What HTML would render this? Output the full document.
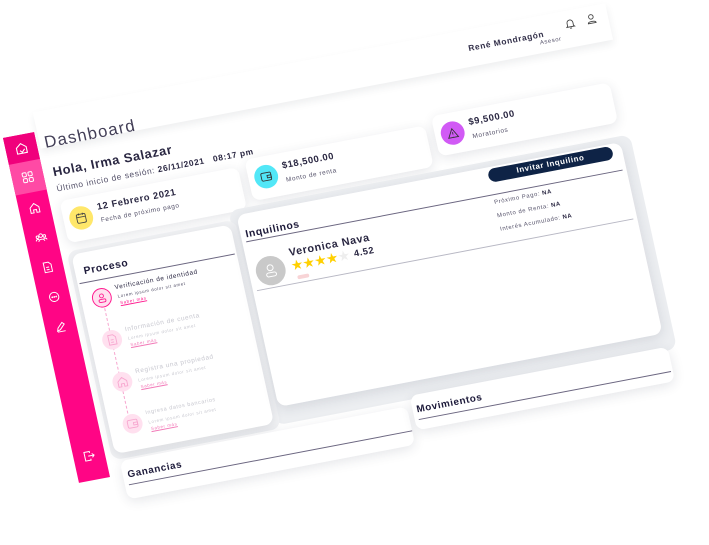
<!DOCTYPE html>
<html><head><meta charset="utf-8"><style>
*{margin:0;padding:0;box-sizing:border-box}
html,body{width:709px;height:545px;background:#fff;overflow:hidden;font-family:"Liberation Sans",sans-serif;color:#1d1a3a}
#s{position:absolute;left:0;top:0;width:620px;height:360px;transform-origin:0 0;transform:matrix(0.97,-0.185,0.211,0.958,3,138)}
.a{position:absolute}
.card{position:absolute;background:#fff;border-radius:8px;box-shadow:0 3px 12px rgba(40,50,70,.12)}
.t{position:absolute;white-space:nowrap;letter-spacing:.6px}
.circ{position:absolute;border-radius:50%}
svg{position:absolute;overflow:visible}
.line{position:absolute;height:1px;background:#6b6680}
.gl{position:absolute;height:1px;background:#b8b8c4}
</style></head><body>
<div id="s">
  <div class="a" style="left:35px;top:-20px;width:590px;height:38px;background:#fff;box-shadow:0 4px 8px rgba(40,50,70,.08)"></div>
  <div class="t" style="left:40px;top:3px;font-size:17px;color:#444058;letter-spacing:1.2px">Dashboard</div>
  <div class="t" style="left:480px;top:-6px;font-size:8.5px;font-weight:bold;color:#33304a">René Mondragón</div>
  <div class="t" style="left:552px;top:5px;font-size:6px;color:#55526a">Asesor</div>
  <svg style="left:580px;top:-12px" width="12" height="12" viewBox="0 0 12 12"><path d="M3 8V5a3 3 0 0 1 6 0v3l1 1H2zM5 10.5h2" fill="none" stroke="#444" stroke-width="0.9"/></svg>
  <svg style="left:602px;top:-13px" width="12" height="12" viewBox="0 0 12 12"><circle cx="6" cy="4" r="2.3" fill="none" stroke="#444" stroke-width="0.9"/><path d="M2 10.5c0-2.3 8-2.3 8 0z" fill="none" stroke="#444" stroke-width="0.9"/></svg>

  <div class="a" style="left:0;top:0;width:32px;height:360px;background:#ff0585"></div>
  <div class="a" style="left:0;top:0;width:32px;height:28px;background:#f0007c"></div>
  <div class="a" style="left:0;top:28px;width:32px;height:32px;background:#ff4aa5"></div>
  <svg style="left:9px;top:7px" width="14" height="14" viewBox="0 0 14 14"><path d="M2 12V6l5-4 5 4v6zM5 9l2 2 3-3" fill="none" stroke="#fff" stroke-width="1.1"/></svg>
  <svg style="left:10px;top:38px" width="12" height="12" viewBox="0 0 12 12" fill="none" stroke="#fff" stroke-width="1"><rect x="1" y="1" width="4" height="4" rx="1"/><rect x="7" y="1" width="4" height="4" rx="1"/><rect x="1" y="7" width="4" height="4" rx="1"/><rect x="7" y="7" width="4" height="4" rx="1"/></svg>
  <svg style="left:10px;top:70px" width="12" height="12" viewBox="0 0 12 12"><path d="M1.5 11V5.5L6 1.5l4.5 4V11H7.5V8h-3v3z" fill="none" stroke="#fff" stroke-width="1"/></svg>
  <svg style="left:10px;top:101px" width="12" height="12" viewBox="0 0 12 12" fill="none" stroke="#fff" stroke-width="1"><circle cx="6" cy="4" r="1.8"/><circle cx="2.5" cy="5" r="1.3"/><circle cx="9.5" cy="5" r="1.3"/><path d="M3 10c0-3 6-3 6 0M0.5 9c0-2 3-2 3-1M11.5 9c0-2-3-2-3-1"/></svg>
  <svg style="left:10px;top:132px" width="12" height="12" viewBox="0 0 12 12" fill="none" stroke="#fff" stroke-width="1"><path d="M2.5 1h5l2.5 2.5V11h-7.5zM4.5 6h3M4.5 8.5h3"/></svg>
  <svg style="left:10px;top:163px" width="12" height="12" viewBox="0 0 12 12" fill="none" stroke="#fff" stroke-width="1"><circle cx="6" cy="6" r="4.7"/><circle cx="4" cy="6" r=".4"/><circle cx="6" cy="6" r=".4"/><circle cx="8" cy="6" r=".4"/></svg>
  <svg style="left:10px;top:194px" width="12" height="12" viewBox="0 0 12 12" fill="none" stroke="#fff" stroke-width="1"><path d="M2 10l1-3 5-5 2 2-5 5zM2 11h8"/></svg>
  <svg style="left:10px;top:329px" width="12" height="12" viewBox="0 0 12 12" fill="none" stroke="#fff" stroke-width="1"><path d="M7 3V1.5H1.5v9H7V9M5 6h6M9 4l2 2-2 2"/></svg>

  <div class="t" style="left:42px;top:36px;font-size:13px;font-weight:bold;color:#2a2742">Hola, Irma Salazar</div>
  <div class="t" style="left:42px;top:56px;font-size:8.5px;color:#55526a">Último inicio de sesión: <b style="color:#2a2742">26/11/2021 &nbsp; 08:17 pm</b></div>

  <div class="card" style="left:42px;top:74px;width:184px;height:44px"></div>
  <div class="circ" style="left:48px;top:83px;width:24px;height:24px;background:#ffe76a"></div>
  <svg style="left:54px;top:89px" width="12" height="12" viewBox="0 0 12 12" fill="none" stroke="#444" stroke-width=".9"><rect x="1.5" y="2" width="9" height="9" rx="1.5"/><path d="M1.5 5h9M4 1v2M8 1v2"/></svg>
  <div class="t" style="left:78px;top:82px;font-size:9.5px;font-weight:bold;color:#2a2742">12 Febrero 2021</div>
  <div class="t" style="left:79px;top:98px;font-size:6.5px;color:#55526a">Fecha de próximo pago</div>

  <div class="card" style="left:234px;top:68px;width:186px;height:43px"></div>
  <div class="circ" style="left:240px;top:77px;width:24px;height:24px;background:#52e7f7"></div>
  <svg style="left:246px;top:83px" width="12" height="12" viewBox="0 0 12 12" fill="none" stroke="#333" stroke-width=".9"><rect x="1" y="2" width="10" height="8" rx="1.5"/><path d="M7 5h4v2.5H7z"/></svg>
  <div class="t" style="left:270px;top:76px;font-size:9.5px;font-weight:bold;color:#2a2742">$18,500.00</div>
  <div class="t" style="left:271px;top:93px;font-size:6.5px;color:#55526a">Monto de renta</div>

  <div class="card" style="left:428px;top:60px;width:184px;height:42px"></div>
  <div class="circ" style="left:434px;top:69px;width:24px;height:24px;background:#d15af5"></div>
  <svg style="left:440px;top:75px" width="12" height="12" viewBox="0 0 12 12" fill="none" stroke="#333" stroke-width=".9"><path d="M6 1.5L11 10.5H1zM6 5v2.5M6 9v.2"/></svg>
  <div class="t" style="left:464px;top:68px;font-size:9.5px;font-weight:bold;color:#2a2742">$9,500.00</div>
  <div class="t" style="left:465px;top:85px;font-size:6.5px;color:#55526a">Moratorios</div>

  <div class="a" style="left:207px;top:116px;width:414px;height:224px;background:#eceef1;border-radius:10px"></div>
  <div class="a" style="left:38px;top:126px;width:174px;height:218px;background:#f1f2f4;border-radius:10px"></div>

  <div class="card" style="left:42px;top:130px;width:164px;height:208px;border-radius:9px"></div>
  <div class="t" style="left:51px;top:143px;font-size:10.5px;font-weight:bold;color:#1d1a3a">Proceso</div>
  <div class="line" style="left:44px;top:160px;width:160px"></div>
  <div class="a" style="left:63px;top:190px;height:120px;border-left:1px dashed #f7a6cf"></div>
  <div class="circ" style="left:53px;top:169px;width:20px;height:20px;background:#ffe0ef;border:1.2px solid #ff1a8f"></div>
  <svg style="left:57px;top:173px" width="12" height="12" viewBox="0 0 12 12" fill="none" stroke="#ff1a8f" stroke-width=".9"><circle cx="6" cy="4" r="2"/><rect x="2.5" y="7.5" width="7" height="3" rx="1.5"/></svg>
  <div class="t" style="left:78px;top:168px;font-size:6.5px;color:#2a2742">Verificación de identidad</div>
  <div class="t" style="left:79px;top:178px;font-size:4.5px;color:#55526a">Lorem ipsum dolor sit amet</div>
  <div class="t" style="left:80px;top:185px;font-size:4.5px;color:#ff1a8f;text-decoration:underline">Saber más</div>

  <div class="circ" style="left:54px;top:213px;width:20px;height:20px;background:#ffe0ef"></div>
  <svg style="left:58px;top:217px" width="12" height="12" viewBox="0 0 12 12" fill="none" stroke="#f7a6cf" stroke-width=".9"><path d="M2.5 1h5l2.5 2.5V11h-7.5zM4.5 6h3M4.5 8.5h3"/></svg>
  <div class="t" style="left:79px;top:212px;font-size:6.5px;color:#c8c8d0">Información de cuenta</div>
  <div class="t" style="left:80px;top:222px;font-size:4.5px;color:#c8c8d0">Lorem ipsum dolor sit amet</div>
  <div class="t" style="left:81px;top:229px;font-size:4.5px;color:#f27ab8;text-decoration:underline">Saber más</div>

  <div class="circ" style="left:55px;top:257px;width:20px;height:20px;background:#ffe0ef"></div>
  <svg style="left:59px;top:261px" width="12" height="12" viewBox="0 0 12 12" fill="none" stroke="#f7a6cf" stroke-width=".9"><path d="M1.5 11V5.5L6 1.5l4.5 4V11H7.5V8h-3v3z"/></svg>
  <div class="t" style="left:80px;top:256px;font-size:6.5px;color:#c8c8d0">Registra una propiedad</div>
  <div class="t" style="left:81px;top:266px;font-size:4.5px;color:#c8c8d0">Lorem ipsum dolor sit amet</div>
  <div class="t" style="left:82px;top:273px;font-size:4.5px;color:#f27ab8;text-decoration:underline">Saber más</div>

  <div class="circ" style="left:56px;top:301px;width:20px;height:20px;background:#ffe0ef"></div>
  <svg style="left:60px;top:305px" width="12" height="12" viewBox="0 0 12 12" fill="none" stroke="#f7a6cf" stroke-width=".9"><rect x="1" y="2" width="10" height="8" rx="1.5"/><path d="M7 5h4v2.5H7z"/></svg>
  <div class="t" style="left:81px;top:300px;font-size:5.5px;color:#c8c8d0">Ingresa datos bancarios</div>
  <div class="t" style="left:82px;top:310px;font-size:4.5px;color:#c8c8d0">Lorem ipsum dolor sit amet</div>
  <div class="t" style="left:83px;top:317px;font-size:4.5px;color:#f27ab8;text-decoration:underline">Saber más</div>

  <div class="card" style="left:214px;top:122px;width:396px;height:200px;border-radius:9px"></div>
  <div class="a" style="left:472px;top:124px;width:128px;height:14px;background:#0e2346;border-radius:8px"></div>
  <div class="t" style="left:472px;top:126px;width:128px;text-align:center;font-size:8px;font-weight:bold;color:#fff">Invitar Inquilino</div>
  <div class="line" style="left:218px;top:150px;width:388px"></div>
  <div class="t" style="left:219px;top:137px;font-size:10.5px;font-weight:bold;color:#1d1a3a">Inquilinos</div>
  <div class="t" style="left:472px;top:156px;font-size:6px;color:#55526a">Próximo Pago: <b style="color:#2a2742">NA</b></div>
  <div class="t" style="left:472px;top:170px;font-size:6px;color:#55526a">Monto de Renta: <b style="color:#2a2742">NA</b></div>
  <div class="t" style="left:472px;top:184px;font-size:6px;color:#55526a">Interés Acumulado: <b style="color:#2a2742">NA</b></div>
  <div class="gl" style="left:218px;top:201px;width:388px"></div>
  <div class="circ" style="left:221px;top:169px;width:30px;height:30px;background:#c9c9c9"></div>
  <svg style="left:229px;top:176px" width="14" height="16" viewBox="0 0 14 16" fill="none" stroke="#fff" stroke-width="1"><circle cx="7" cy="5" r="3"/><rect x="2" y="10" width="10" height="4" rx="2"/></svg>
  <div class="t" style="left:258px;top:164px;font-size:11px;font-weight:bold;color:#2a2742">Veronica Nava</div>
  <div class="t" style="left:257px;top:176px;font-size:14px;line-height:14px;color:#ffd000;letter-spacing:-0.5px">★★★★<span style="color:#eee">★</span></div>
  <div class="t" style="left:322px;top:178px;font-size:9.5px;font-weight:bold;color:#2a2742">4.52</div>
  <div class="a" style="left:261px;top:194px;width:12px;height:4px;background:#f8d4d6;border-radius:2px"></div>

  <div class="card" style="left:45px;top:346px;width:296px;height:40px"></div>
  <div class="t" style="left:50px;top:356px;font-size:10px;font-weight:bold;color:#1d1a3a">Ganancias</div>
  <div class="line" style="left:49px;top:371px;width:292px"></div>
  <div class="card" style="left:346px;top:336px;width:266px;height:36px"></div>
  <div class="t" style="left:350px;top:346px;font-size:10px;font-weight:bold;color:#1d1a3a">Movimientos</div>
  <div class="line" style="left:350px;top:361px;width:260px"></div>
</div>
</body></html>
